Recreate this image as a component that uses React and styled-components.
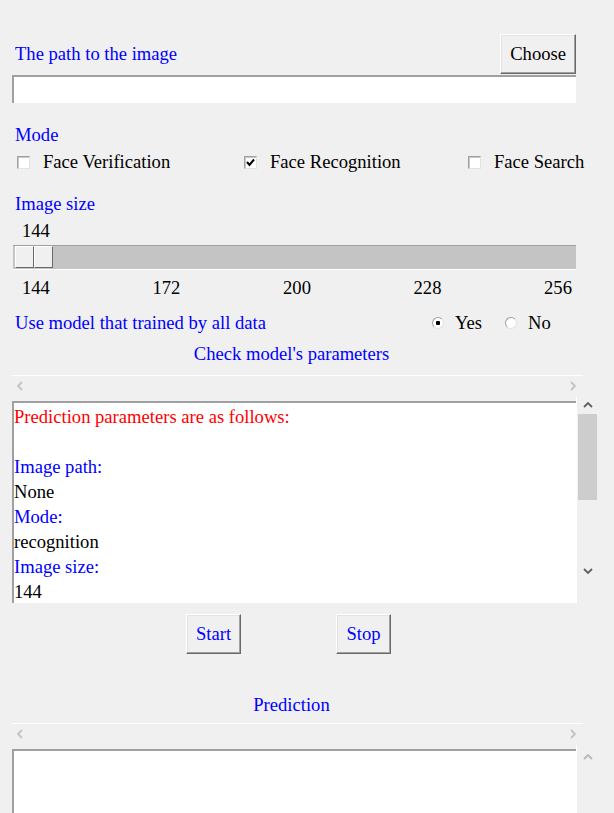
import React from "react";
import styled, { createGlobalStyle } from "styled-components";

const GlobalStyle = createGlobalStyle`
  body {
    margin: 0;
    background: #f0f0f0;
    font-family: "Liberation Serif", "Times New Roman", serif;
    font-size: 18.6px;
    color: #000;
    overflow: hidden;
  }
`;

const ticks = [144, 172, 200, 228, 256];
const modes = [
  { label: "Face Verification", checked: false },
  { label: "Face Recognition", checked: true },
  { label: "Face Search", checked: false }
];
const params = [
  { text: "Prediction parameters are as follows:", color: "#ff0000" },
  { text: "\u00a0", color: "#000" },
  { text: "Image path:", color: "#0000ff" },
  { text: "None", color: "#000" },
  { text: "Mode:", color: "#0000ff" },
  { text: "recognition", color: "#000" },
  { text: "Image size:", color: "#0000ff" },
  { text: "144", color: "#000" }
];

const Chevron = ({ dir, color }) => {
  const pts = {
    left: "5,1 1,5 5,9",
    right: "1,1 5,5 1,9",
    up: "1,5 5,1 9,5",
    down: "1,1 5,5 9,1"
  }[dir];
  const vertical = dir === "up" || dir === "down";
  return (
    <svg width={vertical ? 10 : 6} height={vertical ? 6 : 10} viewBox={vertical ? "0 0 10 6" : "0 0 6 10"}>
      <polyline points={pts} fill="none" stroke={color} strokeWidth="1.8" />
    </svg>
  );
};

const Check = () => (
  <svg width="9" height="9" viewBox="0 0 9 9">
    <polyline points="1,4 3.5,7 8,1.5" fill="none" stroke="#000" strokeWidth="2" />
  </svg>
);

function HScroll({ top }) {
  return (
    <>
      <HLine top={top} />
      <ArrowRow>
        <Chevron dir="left" color="#c2c2c2" />
        <Chevron dir="right" color="#c2c2c2" />
      </ArrowRow>
    </>
  );
}

export default function App() {
  return (
    <Page>
      <GlobalStyle />
      <PathRow>
        <Label>The path to the image</Label>
        <RaisedButton>Choose</RaisedButton>
      </PathRow>
      <Entry />

      <SectionLabel top={21}>Mode</SectionLabel>
      <CheckRow>
        {modes.map(m => (
          <CheckItem key={m.label}>
            <CheckBox>{m.checked && <Check />}</CheckBox>
            {m.label}
          </CheckItem>
        ))}
      </CheckRow>

      <SectionLabel top={20}>Image size</SectionLabel>
      <SliderValue>144</SliderValue>
      <Trough>
        <Handle>
          <HandleHalf />
          <HandleHalf />
        </Handle>
      </Trough>
      <Ticks>
        {ticks.map(t => (
          <span key={t}>{t}</span>
        ))}
      </Ticks>

      <ModelRow>
        <Label>Use model that trained by all data</Label>
        <RadioGroup>
          <RadioItem>
            <Radio checked />
            Yes
          </RadioItem>
          <RadioItem>
            <Radio />
            No
          </RadioItem>
        </RadioGroup>
      </ModelRow>

      <Title top={9}>Check model's parameters</Title>
      <HScroll top={10} />
      <Panel>
        <TextArea>
          {params.map((p, i) => (
            <Line key={i} style={{ color: p.color }}>
              {p.text}
            </Line>
          ))}
        </TextArea>
        <VScroll>
          <Chevron dir="up" color="#606060" />
          <Thumb />
          <Chevron dir="down" color="#606060" />
        </VScroll>
      </Panel>

      <ButtonRow>
        <RaisedButton blue>Start</RaisedButton>
        <RaisedButton blue>Stop</RaisedButton>
      </ButtonRow>

      <Title top={40}>Prediction</Title>
      <HScroll top={7} />
      <Panel grow>
        <TextArea grow />
        <VScroll lower>
          <Chevron dir="up" color="#b8b8b8" />
        </VScroll>
      </Panel>
    </Page>
  );
}

const Page = styled.div`
  width: 614px;
  height: 813px;
  display: flex;
  flex-direction: column;
  overflow: hidden;
`;

const Label = styled.span`
  color: #0000ff;
  line-height: 22px;
`;

const PathRow = styled.div`
  display: flex;
  justify-content: space-between;
  align-items: center;
  margin: 34px 38px 0 15px;
  height: 39px;
`;

const RaisedButton = styled.button`
  box-sizing: border-box;
  height: 40px;
  padding: 0 9px;
  background: #f0f0f0;
  font-family: inherit;
  font-size: 18.6px;
  color: ${props => (props.blue ? "#0000ff" : "#000")};
  border: 1px solid;
  border-color: #ffffff #696969 #696969 #ffffff;
  box-shadow: inset -1px -1px 0 #a0a0a0, inset 1px 1px 0 #e3e3e3;
  cursor: pointer;
`;

const Entry = styled.div`
  box-sizing: border-box;
  margin: 2px 0 0 12px;
  width: 564px;
  height: 28px;
  background: #fff;
  border-top: 2px solid #a0a0a0;
  border-left: 2px solid #a0a0a0;
`;

const SectionLabel = styled.div`
  color: #0000ff;
  line-height: 22px;
  margin: ${props => props.top}px 0 0 15px;
`;

const CheckRow = styled.div`
  display: grid;
  grid-template-columns: 227px 224px auto;
  margin: 5px 0 0 17px;
  line-height: 22px;
`;

const CheckItem = styled.label`
  display: flex;
  align-items: center;
  gap: 13px;
`;

const CheckBox = styled.span`
  box-sizing: border-box;
  width: 13px;
  height: 13px;
  display: flex;
  align-items: center;
  justify-content: center;
  background: #fff;
  border: 1px solid;
  border-color: #a0a0a0 #e3e3e3 #e3e3e3 #a0a0a0;
  box-shadow: inset 1px 1px 0 #c8c8c8;
`;

const SliderValue = styled.div`
  margin: 5px 0 0 22px;
  line-height: 22px;
`;

const Trough = styled.div`
  box-sizing: border-box;
  display: flex;
  margin: 3px 0 0 13px;
  width: 563px;
  height: 25px;
  padding: 0 0 1px 2px;
  background: #c4c4c4;
  border-top: 1px solid #a0a0a0;
  border-bottom: 1px solid #ffffff;
`;

const Handle = styled.div`
  display: flex;
  width: 38px;
`;

const HandleHalf = styled.div`
  flex: 1;
  background: #f0f0f0;
  border: 1px solid;
  border-color: #ffffff #696969 #696969 #ffffff;
`;

const Ticks = styled.div`
  display: flex;
  justify-content: space-between;
  margin: 7px 42px 0 22px;
  line-height: 22px;
`;

const ModelRow = styled.div`
  display: grid;
  grid-template-columns: 417px auto;
  margin: 13px 0 0 15px;
  line-height: 22px;
`;

const RadioGroup = styled.div`
  display: flex;
  gap: 23px;
`;

const RadioItem = styled.label`
  display: flex;
  align-items: center;
  gap: 11px;
`;

const Radio = styled.span`
  box-sizing: border-box;
  width: 12px;
  height: 12px;
  border-radius: 50%;
  background: ${props =>
    props.checked
      ? "radial-gradient(circle, #000 0 2px, #fff 2.5px)"
      : "#fff"};
  border: 1px solid;
  border-color: #a0a0a0 #e3e3e3 #e3e3e3 #a0a0a0;
`;

const Title = styled.div`
  width: 583px;
  text-align: center;
  color: #0000ff;
  line-height: 22px;
  margin-top: ${props => props.top}px;
`;

const HLine = styled.div`
  margin: ${props => props.top}px 0 0 12px;
  width: 571px;
  height: 1px;
  background: #ffffff;
`;

const ArrowRow = styled.div`
  display: flex;
  justify-content: space-between;
  align-items: center;
  margin: 0 38px 0 17px;
  height: 20px;
`;

const Panel = styled.div`
  display: flex;
  margin: 5px 0 0 12px;
  flex: ${props => (props.grow ? 1 : "none")};
`;

const TextArea = styled.div`
  box-sizing: border-box;
  width: 564px;
  height: ${props => (props.grow ? "auto" : "202px")};
  flex: none;
  background: #fff;
  border-top: 2px solid #a0a0a0;
  border-left: 2px solid #a0a0a0;
  padding-top: 1px;
  line-height: 25px;
  overflow: hidden;
`;

const Line = styled.div`
  white-space: nowrap;
`;

const VScroll = styled.div`
  box-sizing: border-box;
  width: 22px;
  display: flex;
  flex-direction: column;
  align-items: center;
  border-left: 1px solid #ffffff;
  margin-top: -4px;
  padding-top: ${props => (props.lower ? 9 : 5)}px;

  & > svg:first-child {
    margin-bottom: 6px;
  }
  & > svg:last-child:not(:first-child) {
    margin-top: 68px;
  }
`;

const Thumb = styled.div`
  width: 19px;
  height: 86px;
  background: #cdcdcd;
`;

const ButtonRow = styled.div`
  display: flex;
  gap: 95px;
  margin: 11px 0 0 186px;

  & > button {
    width: 55px;
  }
`;
